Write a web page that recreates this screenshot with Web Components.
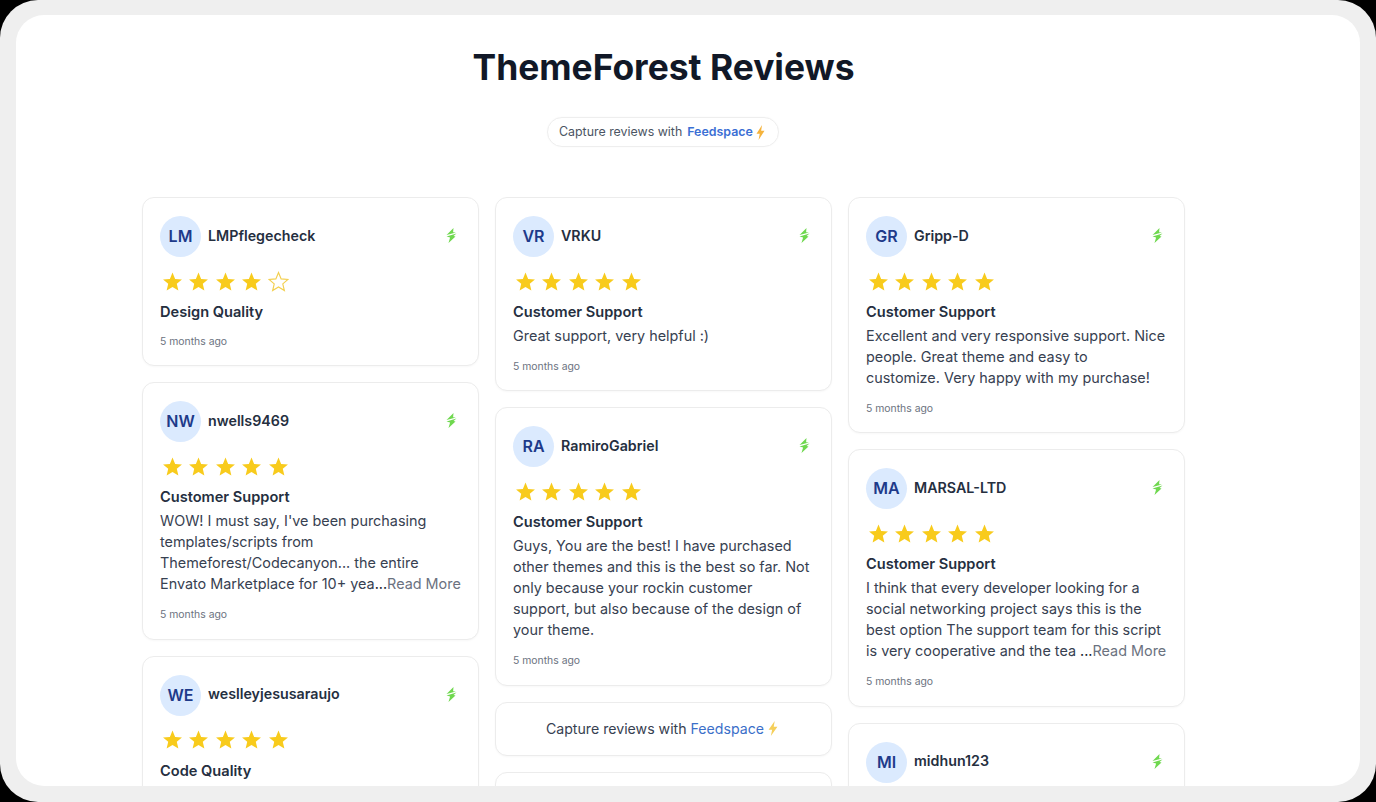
<!DOCTYPE html>
<html lang="en">
<head>
<meta charset="utf-8">
<title>ThemeForest Reviews</title>
<style>
html,body{margin:0;padding:0;background:#000;height:100%;overflow:hidden}
body{font-family:Inter,"Liberation Sans",sans-serif}
</style>
</head>
<body>
<review-wall>
  <wall-heading slot="head">ThemeForest Reviews</wall-heading>
  <capture-pill slot="head"></capture-pill>
  <wall-column>
    <review-card initials="LM" name="LMPflegecheck" rating="4" title="Design Quality"></review-card>
    <review-card initials="NW" name="nwells9469" rating="5" title="Customer Support">WOW! I must say, I've been purchasing templates/scripts from Themeforest/Codecanyon... the entire Envato Marketplace for 10+ yea<read-more></read-more></review-card>
    <review-card initials="WE" name="weslleyjesusaraujo" rating="5" title="Code Quality"></review-card>
  </wall-column>
  <wall-column>
    <review-card initials="VR" name="VRKU" rating="5" title="Customer Support">Great support, very helpful :)</review-card>
    <review-card initials="RA" name="RamiroGabriel" rating="5" title="Customer Support">Guys, You are the best! I have purchased other themes and this is the best so far. Not only because your rockin customer<br>support, but also because of the design of<br>your theme.</review-card>
    <capture-card></capture-card>
    <review-card initials="" name="" rating="0" title=""></review-card>
  </wall-column>
  <wall-column>
    <review-card initials="GR" name="Gripp-D" rating="5" title="Customer Support">Excellent and very responsive support. Nice people. Great theme and easy to<br>customize. Very happy with my purchase!</review-card>
    <review-card initials="MA" name="MARSAL-LTD" rating="5" title="Customer Support">I think that every developer looking for a social networking project says this is the best option The support team for this script is very cooperative and the tea <read-more></read-more></review-card>
    <review-card initials="MI" name="midhun123" rating="5" title="Customer Support"></review-card>
  </wall-column>
</review-wall>
<script>
const BOLT = 'M9.4 0 .8 9.2h5L4 16 13.2 6.2H8z';
class ReviewWall extends HTMLElement{
  constructor(){super();this.attachShadow({mode:'open'}).innerHTML=`<style>
    :host{display:block;box-sizing:border-box;width:1376px;height:802px;background:#efefef;border-radius:38px;padding:15px 16px 16px;overflow:hidden}
    .page{height:771px;background:#fff;border-radius:28px;overflow:hidden;padding:0 175px 0 126px;box-sizing:border-box}
    .head{display:flex;flex-direction:column;align-items:center;height:182px}
    .cols{display:grid;grid-template-columns:repeat(3,337px);gap:16px;align-items:start}
  </style><div class="page"><div class="head"><slot name="head"></slot></div><div class="cols"><slot></slot></div></div>`;}
}
class WallHeading extends HTMLElement{
  constructor(){super();this.attachShadow({mode:'open'}).innerHTML=`<style>
    :host{display:block;margin-top:31px;font:700 35.4px/44px Inter,sans-serif;color:#111827;white-space:nowrap}
  </style><slot></slot>`;}
}
class BoltIcon extends HTMLElement{
  constructor(){super();this.attachShadow({mode:'open'}).innerHTML=`<style>
    :host{display:inline-flex;vertical-align:middle}
    svg{display:block;width:var(--w,9px);height:var(--h,15px);fill:var(--c,#f5b33c)}
  </style><svg viewBox="0 0 14 16" preserveAspectRatio="none"><path d="${BOLT}"/></svg>`;}
}
class CapturePill extends HTMLElement{
  constructor(){super();this.attachShadow({mode:'open'}).innerHTML=`<style>
    :host{display:flex;align-items:center;box-sizing:border-box;margin-top:27px;margin-right:1px;width:232px;height:30px;padding:0 13px 0 11px;border:1px solid #eeeeee;border-radius:15px;background:#fff;font:400 12.4px/16px Inter,sans-serif;color:#4b5563;white-space:nowrap;box-shadow:0 0 2px rgba(0,0,0,.03)}
    b{font-weight:600;color:#3b6fd4;margin-left:5px;margin-right:3px}
  </style>Capture reviews with <b>Feedspace</b><bolt-icon></bolt-icon>`;}
}
class WallColumn extends HTMLElement{
  constructor(){super();this.attachShadow({mode:'open'}).innerHTML=`<style>
    :host{display:flex;flex-direction:column;gap:16px;min-width:0}
  </style><slot></slot>`;}
}
class StarRating extends HTMLElement{
  constructor(){super();
    const n=+this.getAttribute('value')||0;let s='';
    for(let i=0;i<5;i++){
      s+=`<svg viewBox="0 0 24 24"><path class="${i<n?'on':'off'}" d="M12 1.8l3 7.2 7.8.6-5.9 5.1 1.8 7.6L12 18.2l-6.7 4.1 1.8-7.6L1.2 9.6 9 9z"/></svg>`;
    }
    this.attachShadow({mode:'open'}).innerHTML=`<style>
      :host{display:flex;gap:5.5px;margin-left:1.5px;height:24px;align-items:center}
      svg{width:21px;height:21px;display:block}
      .on{fill:#f8cb1c}
      .off{fill:none;stroke:#f3cf4e;stroke-width:1.3}
    </style>${s}`;}
}
class ReviewCard extends HTMLElement{
  constructor(){super();
    const a=k=>this.getAttribute(k)||'';
    this.attachShadow({mode:'open'}).innerHTML=`<style>
      :host{display:block;box-sizing:border-box;background:#fff;border:1px solid #ececec;border-radius:12px;padding:18px 17px 15.4px 17px;box-shadow:0 1px 2px rgba(0,0,0,.03)}
      .top{display:flex;align-items:center;height:41px}
      .av{width:41px;height:41px;border-radius:50%;background:#dbeafe;color:#1e3a8a;font:600 16px/41px Inter,sans-serif;text-align:center;flex:none}
      .name{margin-left:7px;padding-bottom:2px;font:600 14.25px/20px Inter,sans-serif;color:#252f3f;flex:1}
      .logo{width:13px;height:15px;margin:0 3px 2px 0;flex:none;display:block}
      star-rating{margin-top:12px}
      h3{margin:9px 0 0;font:600 14.6px/21px Inter,sans-serif;color:#252f3f}
      .body{margin-top:2px;padding-bottom:2px;font:400 14.4px/21px Inter,sans-serif;color:#374151}
      .date{margin-top:11px;font:400 10.4px/16px Inter,sans-serif;color:#6b7280}
      .body.none{display:none}
    </style>
    <div class="top"><div class="av">${a('initials')}</div><div class="name">${a('name')}</div>
      <svg class="logo" viewBox="0 0 12 15"><path fill="#6fd84f" d="M8 0 1 7 10.4 4.4 7.6 4.2zM11 5.6 1 8.6 4.6 9.4 3 15 10 8.4 8 7.9z"/></svg>
    </div>
    <star-rating value="${a('rating')}"></star-rating>
    <h3>${a('title')}</h3>
    <div class="body ${this.textContent.trim()?'':'none'}"><slot></slot></div>
    <div class="date">5 months ago</div>`;}
}
class ReadMore extends HTMLElement{
  constructor(){super();this.attachShadow({mode:'open'}).innerHTML=`<style>
    :host{display:inline;color:#111827}
    span{color:#6b7280}
  </style>...<span>Read More</span>`;}
}
class CaptureCard extends HTMLElement{
  constructor(){super();this.attachShadow({mode:'open'}).innerHTML=`<style>
    :host{display:flex;align-items:center;justify-content:center;box-sizing:border-box;height:54px;padding-right:3px;background:#fff;border:1px solid #ececec;border-radius:12px;font:400 14.15px/20px Inter,sans-serif;color:#374151;white-space:nowrap;box-shadow:0 1px 2px rgba(0,0,0,.03)}
    a{color:#3b6fc9;margin:0 4px;text-decoration:none}
    bolt-icon{--c:#f5cf5a;--w:10px;--h:15px}
  </style>Capture reviews with <a>Feedspace</a><bolt-icon></bolt-icon>`;}
}
customElements.define('review-wall',ReviewWall);
customElements.define('wall-heading',WallHeading);
customElements.define('bolt-icon',BoltIcon);
customElements.define('capture-pill',CapturePill);
customElements.define('wall-column',WallColumn);
customElements.define('star-rating',StarRating);
customElements.define('read-more',ReadMore);
customElements.define('capture-card',CaptureCard);
customElements.define('review-card',ReviewCard);
</script>
</body>
</html>
